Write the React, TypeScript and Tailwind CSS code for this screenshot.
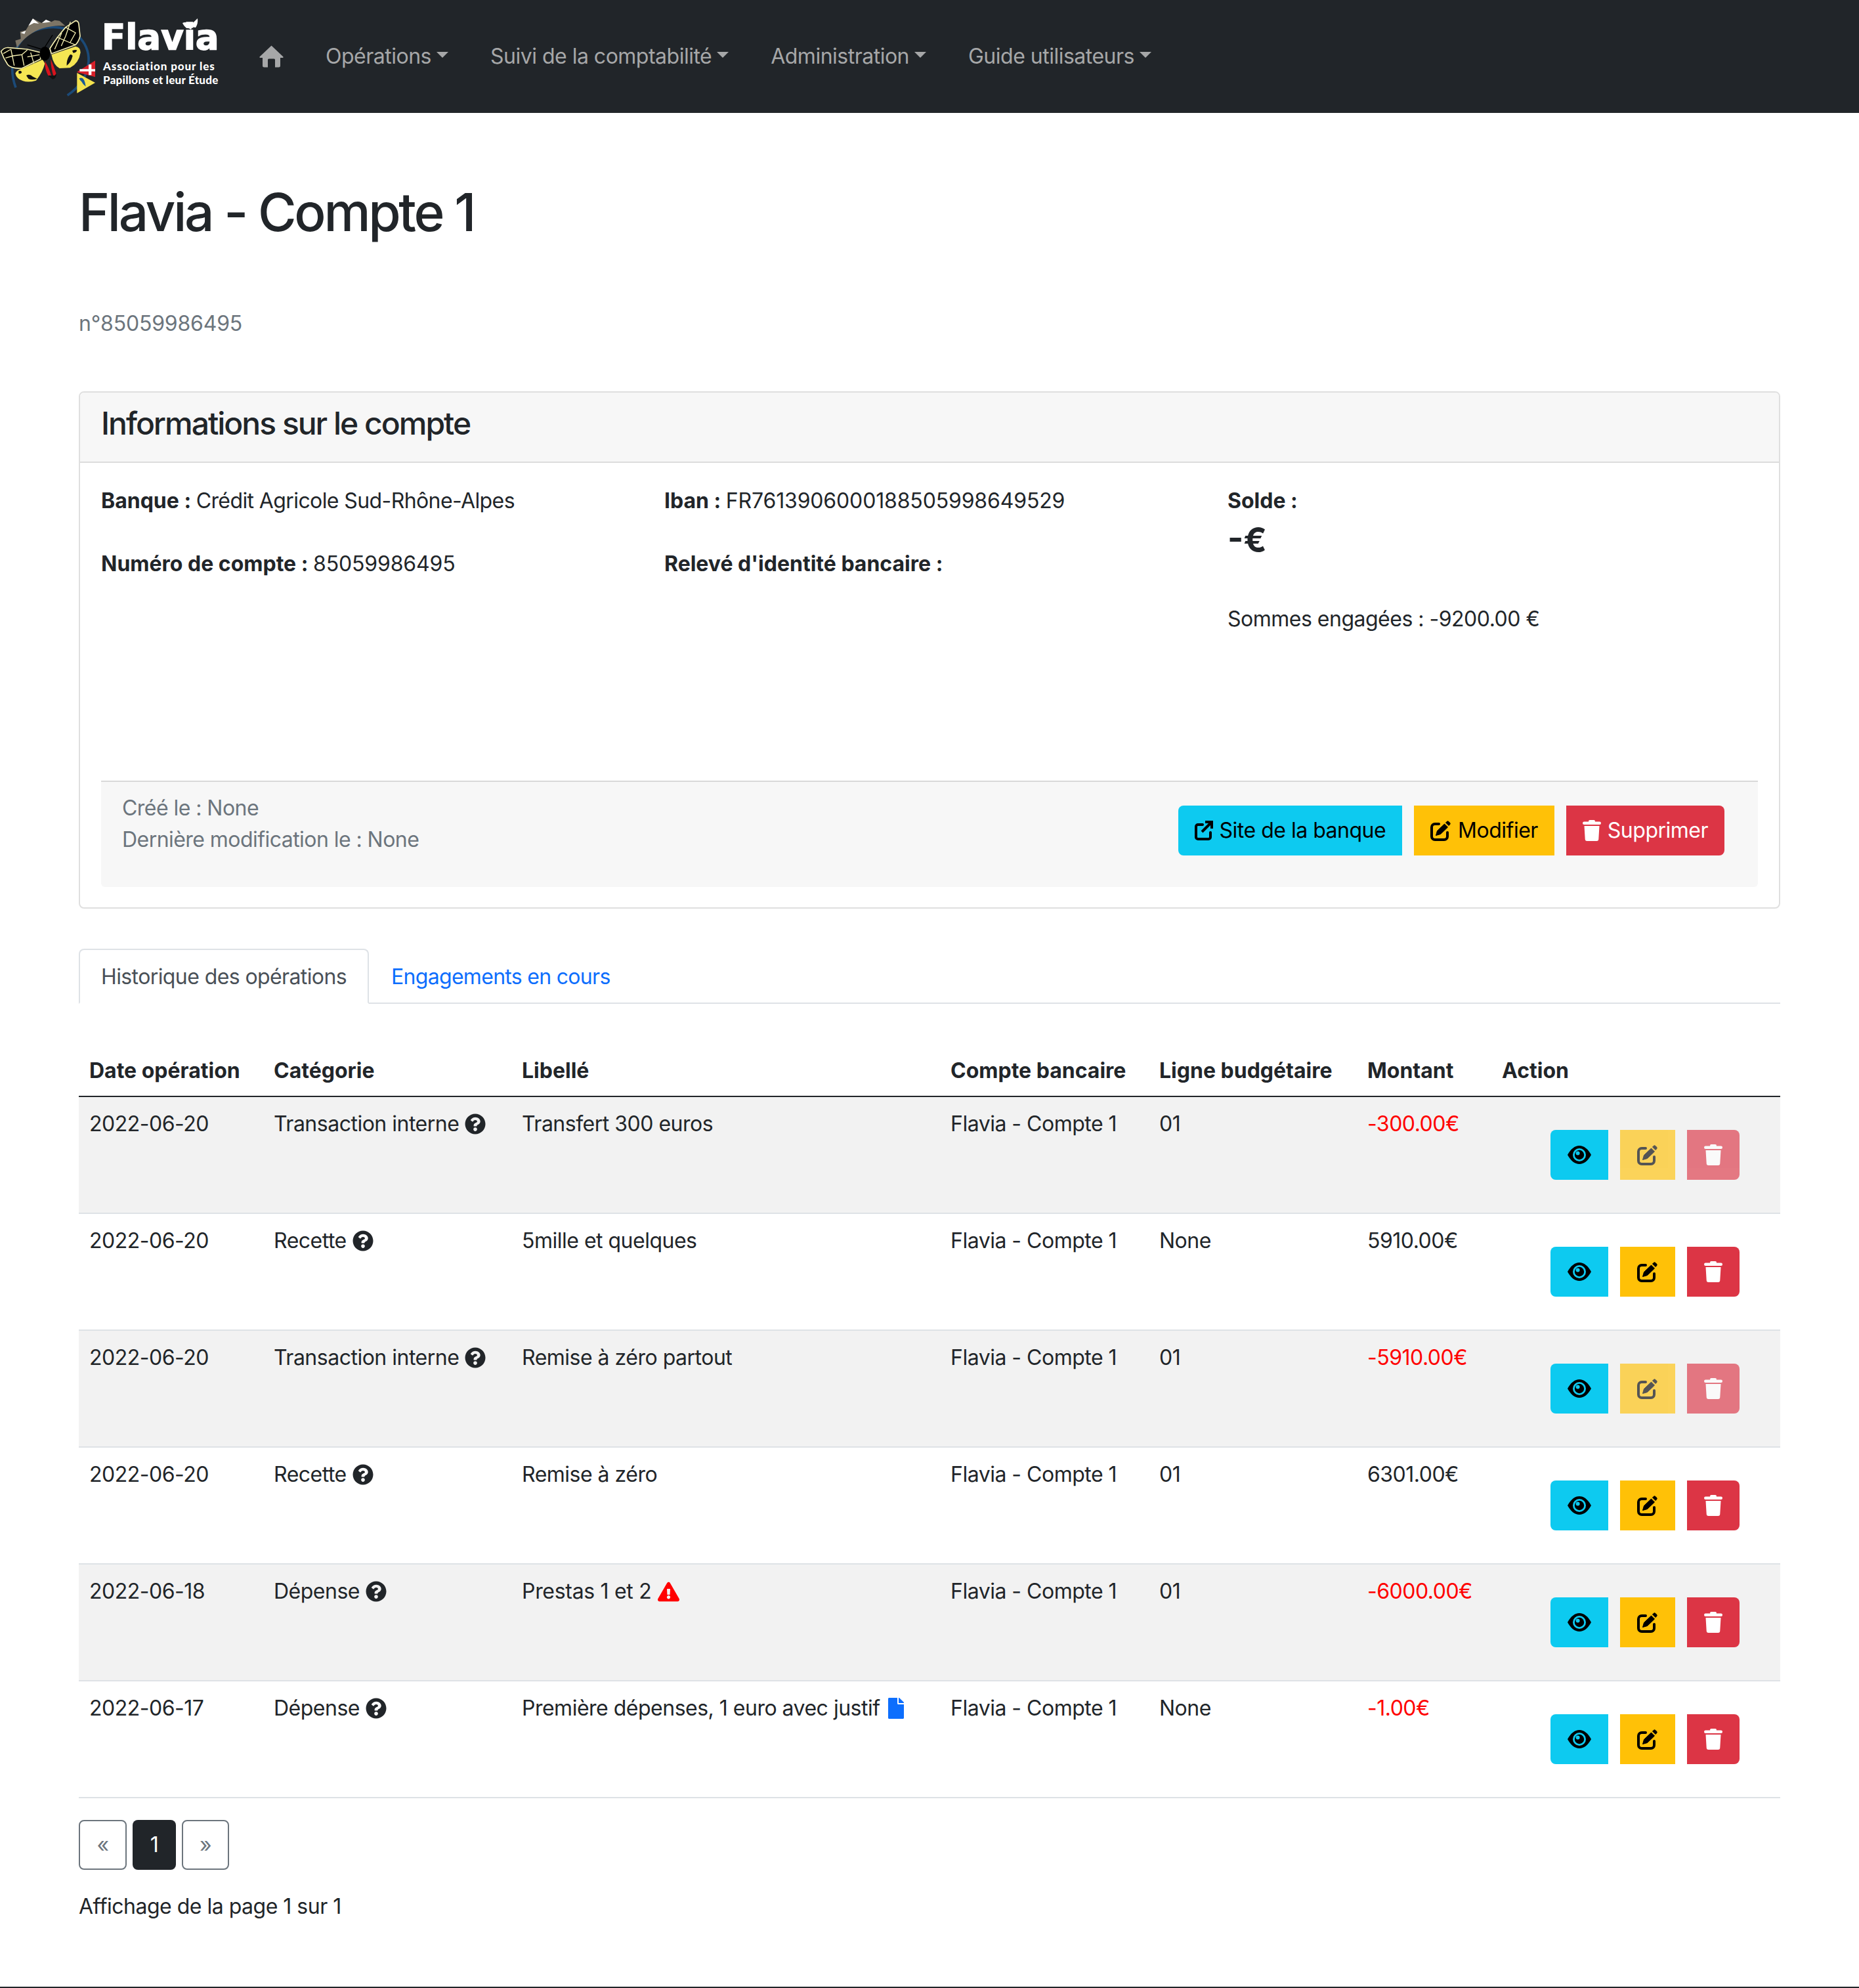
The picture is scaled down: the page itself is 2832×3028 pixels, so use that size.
import { FaQuestionCircle, FaExclamationTriangle, FaFile } from "react-icons/fa";

function HomeIcon() {
  return (
    <svg width="37" height="34" viewBox="0 0 37 34" className="fill-current">
      <path d="M18.5 0.5 L36.5 17.5 Q37 19 35.5 19 H32 V31 Q32 33.5 29.5 33.5 H24 V22 Q24 20.5 22.5 20.5 H14.5 Q13 20.5 13 22 V33.5 H7.5 Q5 33.5 5 31 V19 H1.5 Q0 19 0.5 17.5 Z" />
    </svg>
  );
}

function EyeIcon() {
  return (
    <svg width="36" height="28" viewBox="0 0 36 28">
      <path d="M0 14 C5 5 11 0 18 0 C25 0 31 5 36 14 C31 23 25 28 18 28 C11 28 5 23 0 14Z" fill="#000" />
      <circle cx="18" cy="14" r="10" fill="#0dcaf0" />
      <circle cx="18" cy="14" r="7.2" fill="#000" />
      <circle cx="15.6" cy="11.6" r="3" fill="#0dcaf0" />
    </svg>
  );
}

function EditIcon() {
  return (
    <svg width="32" height="32" viewBox="0 0 32 32" className="fill-current stroke-current">
      <path d="M13 6 H7 A5 5 0 0 0 2 11 V25 A5 5 0 0 0 7 30 H21 A5 5 0 0 0 26 25 V19" fill="none" strokeWidth="4" strokeLinecap="round" />
      <path d="M8.5 23.5 L10.5 16.5 L21.5 6 L26.5 11 L15.5 21.5 Z" strokeWidth="1" strokeLinejoin="round" />
      <path d="M23.5 4 L25 2.5 Q26.5 1 28 2.5 L29.5 4 Q31 5.5 29.5 7 L28 8.5 Z" strokeWidth="1" strokeLinejoin="round" />
    </svg>
  );
}

function TrashIcon() {
  return (
    <svg width="28" height="32" viewBox="0 0 28 32" className="fill-current">
      <rect x="0" y="2.5" width="28" height="4.5" rx="2.2" />
      <rect x="9" y="0" width="10" height="4" rx="2" />
      <path d="M2.5 9 H25.5 L24.3 29 A3 3 0 0 1 21.3 32 H6.7 A3 3 0 0 1 3.7 29 Z" />
    </svg>
  );
}

function ExternalIcon() {
  return (
    <svg width="28" height="30" viewBox="0 0 28 30" fill="none" stroke="currentColor">
      <path d="M12 6 H5 A3 3 0 0 0 2 9 V25 A3 3 0 0 0 5 28 H21 A3 3 0 0 0 24 25 V18" strokeWidth="4" strokeLinecap="round" />
      <path d="M11 17 L25 3" strokeWidth="4" />
      <path d="M16 2 H26 V12" strokeWidth="4" />
    </svg>
  );
}

function Logo() {
  return (
    <div className="relative flex w-[363px] h-[172px] shrink-0 tracking-normal">
      <svg width="150" height="170" viewBox="0 0 450 510" className="shrink-0">
        <path d="M72 400 C30 290 70 150 200 128 C330 105 410 190 405 280 C400 350 360 400 308 436" fill="none" stroke="#1b4a78" strokeWidth="11" />
        <path d="M70 185 L95 178 L92 145 L118 138 L150 85 L190 105 L210 90 L235 100 L250 92 L272 95 L298 118 C220 115 140 130 78 218 Z" fill="#7d7566" />
        <path d="M130 118 L150 85 L178 108 L155 105 Z M192 105 L210 90 L232 100 L212 103 Z M95 150 L118 140 L112 155 Z" fill="#fff" />
        <path d="M345 95 Q358 95 360 110 L366 165 Q360 190 345 205 L235 245 L228 222 Q260 170 300 125 Z" fill="#000" stroke="#f4eeb0" strokeWidth="5" />
        <path d="M322 100 L300 165 M260 170 L320 195 L345 150 L300 125 M320 195 L345 205 M282 150 L250 225 M280 210 L300 165" stroke="#f4eeb0" strokeWidth="4" fill="none" />
        <path d="M235 250 L345 212 Q368 215 368 240 Q360 290 320 310 L272 312 Q245 300 235 250Z" fill="#f5e653" />
        <path d="M318 252 Q325 245 332 255 Q325 285 305 300 Q303 275 318 252Z M330 232 Q345 225 352 230 Q348 240 335 242Z" fill="#111" />
        <path d="M5 235 Q20 215 40 218 L125 225 L185 240 L185 270 L100 312 Q50 315 35 295 Q15 265 5 235Z" fill="#000" stroke="#f4eeb0" strokeWidth="5" />
        <path d="M15 245 L50 225 M50 225 L65 300 M25 265 L60 255 L100 250 L110 300 M100 250 L125 228 M140 240 L155 290 M125 260 L180 250" stroke="#f4eeb0" strokeWidth="4" fill="none" />
        <path d="M70 335 Q75 320 105 312 L195 272 L205 290 Q195 330 165 368 Q130 378 105 370 Q75 360 70 335Z" fill="#f5e653" />
        <path d="M120 345 Q135 335 150 350 L170 360 Q145 368 130 360Z M85 325 Q95 320 100 330 Q95 340 85 335Z" fill="#111" />
        <path d="M205 280 Q225 310 235 350 L220 345 Q205 320 205 280Z M232 270 Q245 300 258 340 L245 350 Q232 310 232 270Z" fill="#d9131d" />
        <path d="M220 345 L250 345 L258 335 Q258 360 240 362Z" fill="#111" />
        <ellipse cx="205" cy="245" rx="24" ry="32" fill="#000" />
        <path d="M205 215 L240 160 M190 225 L125 205" stroke="#000" strokeWidth="4" />
        <path d="M358 325 L435 277 L435 352 L352 330Z" fill="#d8202a" />
        <path d="M405 295 H418 V316 H435 V326 H418 V343 H405 V326 H364 V316 H405Z" fill="#fff" />
        <path d="M352 333 L435 378 L352 426Z" fill="#f5e34e" />
        <path d="M362 358 Q385 345 392 395 Q378 385 372 372 Q365 368 362 358Z" fill="#1b5a94" />
      </svg>
      <div className="flex flex-col pl-[5px] text-white">
        <div className="font-['DejaVu_Sans',sans-serif] font-bold text-[53px] leading-[52px] mt-[31px] h-[59px] [-webkit-text-stroke:1.5px_white]">Flavia</div>
        <div className="pl-[2px] font-['Lato',sans-serif] font-black text-[17px] leading-[21px] whitespace-nowrap tracking-[0.9px]">Association pour les</div>
        <div className="pl-[2px] font-['Lato',sans-serif] font-black text-[17px] leading-[21px] whitespace-nowrap tracking-[0.25px]">Papillons et leur Étude</div>
      </div>
      <svg width="24" height="18" viewBox="0 0 24 18" className="absolute left-[278px] top-[28px] fill-white">
        <path d="M0 7 Q6 4 12 10 Q17 6 23 0 Q24 8 20 14 L15 13 L13 17 Q8 14 7 15 Q2 12 0 7Z" />
      </svg>
    </div>
  );
}

function NavLink({ label }: { label: string }) {
  return (
    <a className="flex items-center px-[32px] text-[#a6a7a8] whitespace-nowrap">
      {label}
      <span className="ml-[8px] mb-[6px] w-0 h-0 border-t-[9px] border-x-[9px] border-x-transparent border-t-[#a6a7a8]" />
    </a>
  );
}

const colClass = "px-[16px]";

type Row = {
  date: string;
  cat: string;
  label: React.ReactNode;
  ligne: string;
  montant: string;
  neg: boolean;
  disabled: boolean;
};

const rows: Row[] = [
  { date: "2022-06-20", cat: "Transaction interne", label: "Transfert 300 euros", ligne: "01", montant: "-300.00€", neg: true, disabled: true },
  { date: "2022-06-20", cat: "Recette", label: "5mille et quelques", ligne: "None", montant: "5910.00€", neg: false, disabled: false },
  { date: "2022-06-20", cat: "Transaction interne", label: "Remise à zéro partout", ligne: "01", montant: "-5910.00€", neg: true, disabled: true },
  { date: "2022-06-20", cat: "Recette", label: "Remise à zéro", ligne: "01", montant: "6301.00€", neg: false, disabled: false },
  {
    date: "2022-06-18",
    cat: "Dépense",
    label: (
      <span className="inline-flex items-center gap-[10px]">
        <span className="tracking-[-0.3px]">Prestas 1 et 2</span> <FaExclamationTriangle size={33} color="#ff0000" />
      </span>
    ),
    ligne: "01",
    montant: "-6000.00€",
    neg: true,
    disabled: false,
  },
  {
    date: "2022-06-17",
    cat: "Dépense",
    label: (
      <span className="inline-flex items-center gap-[8px]">
        Première dépenses, 1 euro avec justif <FaFile width={25} height={33} color="#0d6efd" />
      </span>
    ),
    ligne: "None",
    montant: "-1.00€",
    neg: true,
    disabled: false,
  },
];

export default function App() {
  return (
    <div className="font-['Inter',sans-serif] text-[32px] leading-[48px] tracking-[-0.5px] text-[#212529] bg-white h-[3028px] border-b-2 border-[#212529]">
      <nav className="h-[172px] bg-[#212529] flex items-center">
        <Logo />
        <a className="flex items-center px-[32px] text-[#a6a7a8]">
          <HomeIcon />
        </a>
        <NavLink label="Opérations" />
        <NavLink label="Suivi de la comptabilité" />
        <NavLink label="Administration" />
        <NavLink label="Guide utilisateurs" />
      </nav>

      <main className="px-[120px]">
        <h1 className="pt-[103px] text-[80px] leading-[96px] font-medium tracking-[-3.3px]">Flavia - Compte 1</h1>
        <p className="mt-[98px] text-[#6c757d] tracking-[-0.2px]">n°85059986495</p>

        <section className="mt-[79px] h-[788px] border-2 border-[rgba(0,0,0,0.125)] rounded-[8px]">
          <h2 className="h-[107px] px-[32px] pb-[11px] flex items-center text-[48px] leading-[58px] font-medium tracking-[-2px] bg-[#f7f7f7] border-b-2 border-[#dcdcdc] rounded-t-[6px]">
            Informations sur le compte
          </h2>
          <div className="px-[32px] pt-[34px]">
            <div className="grid grid-cols-[858px_858px_1fr] h-[450px]">
              <div>
                <p className="mb-[48px]"><b className="tracking-normal">Banque : </b><span className="tracking-[-0.6px]">Crédit Agricole Sud-Rhône-Alpes</span></p>
                <p><b className="tracking-normal">Numéro de compte : </b><span className="tracking-[-0.15px]">85059986495</span></p>
              </div>
              <div>
                <p className="mb-[48px]"><b className="tracking-normal">Iban : </b><span className="tracking-[-0.15px]">FR7613906000188505998649529</span></p>
                <p><b className="tracking-normal">Relevé d'identité bancaire :</b></p>
              </div>
              <div>
                <p><b className="tracking-normal">Solde :</b></p>
                <p className="mt-[7px] text-[52px] leading-[58px] font-bold tracking-normal">-€</p>
                <p className="mt-[67px]">Sommes engagées : -9200.00 €</p>
              </div>
            </div>
            <div className="border-t-2 border-[#d9d9d9] bg-[#f7f7f7] rounded-b-[6px] flex justify-between items-end pl-[32px] pr-[51px] pt-[16px] pb-[48px]">
              <div className="text-[#6c757d] tracking-[-0.55px]">
                <div>Créé le : None</div>
                <div>Dernière modification le : None</div>
              </div>
              <div className="flex gap-[18px]">
                <a className="h-[76px] px-[25px] flex items-center gap-[10px] rounded-l-[8px] bg-[#0dcaf0] text-black"><ExternalIcon />Site de la banque</a>
                <a className="h-[76px] px-[25px] flex items-center gap-[10px] bg-[#ffc107] text-black"><EditIcon />Modifier</a>
                <a className="h-[76px] px-[25px] flex items-center gap-[10px] rounded-r-[8px] bg-[#dc3545] text-white"><TrashIcon />Supprimer</a>
              </div>
            </div>
          </div>
        </section>

        <div className="mt-[61px] flex border-b-2 border-[#dee2e6]">
          <a className="-mb-[2px] px-[32px] pt-[17px] pb-[13px] border-2 border-b-white border-[#dee2e6] rounded-t-[8px] text-[#495057] bg-white tracking-[-0.6px]">Historique des opérations</a>
          <a className="px-[32px] pt-[17px] pb-[13px] border-2 border-transparent text-[#0d6efd] tracking-[-0.7px]">Engagements en cours</a>
        </div>

        <table className="mt-[62px] w-full table-fixed border-collapse">
          <colgroup>
            <col className="w-[281px]" />
            <col className="w-[378px]" />
            <col className="w-[653px]" />
            <col className="w-[318px]" />
            <col className="w-[317px]" />
            <col className="w-[205px]" />
            <col className="w-[440px]" />
          </colgroup>
          <thead>
            <tr className="border-b-2 border-[#212529]">
              {["Date opération", "Catégorie", "Libellé", "Compte bancaire", "Ligne budgétaire", "Montant", "Action"].map((h) => (
                <th key={h} className={`${colClass} pt-[16px] pb-[14px] text-left font-bold tracking-normal whitespace-nowrap`}>{h}</th>
              ))}
            </tr>
          </thead>
          <tbody>
            {rows.map((r, i) => (
              <tr key={i} className={`h-[178px] border-b-2 border-[#dee2e6] align-top ${i % 2 === 0 ? "bg-[#f2f2f2]" : "bg-white"}`}>
                <td className={`${colClass} pt-[17px]`}>{r.date}</td>
                <td className={`${colClass} pt-[17px]`}>
                  <span className="inline-flex items-center gap-[9px] whitespace-nowrap">
                    {r.cat} <FaQuestionCircle size={32} color="#212529" />
                  </span>
                </td>
                <td className={`${colClass} pt-[17px] whitespace-nowrap`}>{r.label}</td>
                <td className={`${colClass} pt-[17px] whitespace-nowrap`}>Flavia - Compte 1</td>
                <td className={`${colClass} pt-[17px]`}>{r.ligne}</td>
                <td className={`${colClass} pt-[17px] ${r.neg ? "text-[#ff0000]" : ""}`}>{r.montant}</td>
                <td className="pt-[50px] pl-[90px]">
                  <div className="flex gap-[18px]">
                    <a className="w-[88px] h-[76px] flex items-center justify-center rounded-l-[8px] bg-[#0dcaf0]"><EyeIcon /></a>
                    <a className={`w-[84px] h-[76px] flex items-center justify-center bg-[#ffc107] text-black ${r.disabled ? "opacity-65" : ""}`}><EditIcon /></a>
                    <a className={`w-[80px] h-[76px] flex items-center justify-center rounded-r-[8px] bg-[#dc3545] text-white ${r.disabled ? "opacity-65" : ""}`}><TrashIcon /></a>
                  </div>
                </td>
              </tr>
            ))}
          </tbody>
        </table>

        <div className="mt-[33px] flex gap-[9px]">
          <a className="w-[73px] h-[76px] flex items-center justify-center border-2 border-[#6c757d] rounded-[8px] text-[#6c757d]">«</a>
          <a className="w-[66px] h-[76px] flex items-center justify-center rounded-[8px] bg-[#212529] text-white">1</a>
          <a className="w-[72px] h-[76px] flex items-center justify-center border-2 border-[#6c757d] rounded-[8px] text-[#6c757d]">»</a>
        </div>
        <p className="mt-[32px]">Affichage de la page 1 sur 1</p>
      </main>
    </div>
  );
}
